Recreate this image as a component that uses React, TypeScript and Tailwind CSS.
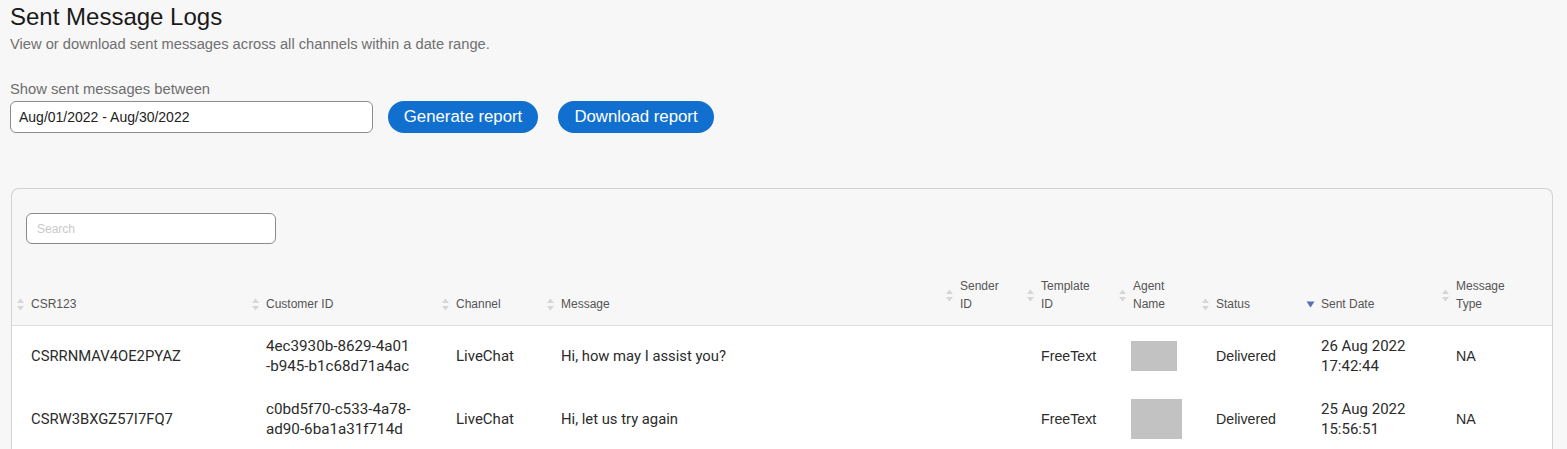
import type { ReactNode } from 'react';

const font = { fontFamily: '"Liberation Sans", Arial, sans-serif' };
const roboto = { fontFamily: 'Roboto, "Liberation Sans", sans-serif' };

interface Column {
  label: ReactNode;
  width: number;
  sorted?: boolean;
}

const columns: Column[] = [
  { label: 'CSR123', width: 235 },
  { label: 'Customer ID', width: 190 },
  { label: 'Channel', width: 105 },
  { label: 'Message', width: 399 },
  { label: <>Sender<br />ID</>, width: 81 },
  { label: <>Template<br />ID</>, width: 92 },
  { label: <>Agent<br />Name</>, width: 83 },
  { label: 'Status', width: 105 },
  { label: 'Sent Date', width: 135, sorted: true },
  { label: <>Message<br />Type</>, width: 115 },
];

interface Row {
  csr: string;
  customer: [string, string];
  channel: string;
  message: string;
  template: string;
  agentBox: string;
  status: string;
  date: [string, string];
  type: string;
}

const rows: Row[] = [
  {
    csr: 'CSRRNMAV4OE2PYAZ',
    customer: ['4ec3930b-8629-4a01', '-b945-b1c68d71a4ac'],
    channel: 'LiveChat',
    message: 'Hi, how may I assist you?',
    template: 'FreeText',
    agentBox: 'w-[46px] h-[30px]',
    status: 'Delivered',
    date: ['26 Aug 2022', '17:42:44'],
    type: 'NA',
  },
  {
    csr: 'CSRW3BXGZ57I7FQ7',
    customer: ['c0bd5f70-c533-4a78-', 'ad90-6ba1a31f714d'],
    channel: 'LiveChat',
    message: 'Hi, let us try again',
    template: 'FreeText',
    agentBox: 'w-[51px] h-[40px]',
    status: 'Delivered',
    date: ['25 Aug 2022', '15:56:51'],
    type: 'NA',
  },
];

function SortIcon({ active }: { active?: boolean }) {
  if (active) {
    return (
      <svg width="7" height="13" viewBox="0 0 7 13" className="shrink-0 overflow-visible">
        <polygon points="-0.5,3.5 7.5,3.5 3.5,9.5" fill="#5b6db3" />
      </svg>
    );
  }
  return (
    <svg width="7" height="13" viewBox="0 0 7 13" className="shrink-0">
      <polygon points="0,5 3.5,0.5 7,5" fill="#d6d6d6" />
      <polygon points="0,8 3.5,12.5 7,8" fill="#d6d6d6" />
    </svg>
  );
}

export default function App() {
  return (
    <div className="min-h-screen bg-[#f7f7f7] pl-[10px] pr-[14px] pt-[3px] text-[#222]" style={font}>
      <h1 className="text-[24px] leading-[28px] font-normal text-[#1a1a1a]">Sent Message Logs</h1>
      <p className="mt-[3px] text-[14.7px] leading-[20px] text-[#707070]">
        View or download sent messages across all channels within a date range.
      </p>

      <label className="mt-[25px] block text-[14.75px] leading-[20px] text-[#6e6e6e]">Show sent messages between</label>
      <div className="mt-[2px] flex items-center">
        <input
          readOnly
          value="Aug/01/2022 - Aug/30/2022"
          className="h-[32px] w-[363px] rounded-[6px] border border-[#8c8c8c] bg-white px-[8px] text-[14px] text-[#222] outline-none"
          style={font}
        />
        <button className="ml-[15px] h-[32px] w-[150px] rounded-full bg-[#1170cf] text-[16.8px] text-white">
          Generate report
        </button>
        <button className="ml-[20px] h-[32px] w-[156px] rounded-full bg-[#1170cf] text-[16.8px] text-white">
          Download report
        </button>
      </div>

      <div className="mt-[55px] ml-[1px] overflow-hidden rounded-t-[8px] border border-b-0 border-[#d2d2d2]">
        <div className="px-[14px] pt-[24px]">
          <input
            readOnly
            placeholder="Search"
            className="h-[31px] w-[250px] rounded-[6px] border border-[#8a8a8a] bg-white px-[10px] text-[12px] text-[#222] outline-none placeholder:text-[#c9c9c9]"
            style={font}
          />
        </div>

        <table className="mt-[26px] w-full table-fixed border-collapse">
          <colgroup>
            {columns.map((c, i) => (
              <col key={i} style={{ width: c.width }} />
            ))}
          </colgroup>
          <thead>
            <tr className="border-b border-[#dcdcdc]">
              {columns.map((c, i) => (
                <th key={i} className="pl-[5px] pt-[7px] pb-[12px] text-left align-bottom font-normal">
                  <div className="flex items-center gap-[7px] text-[12px] leading-[18px] text-[#555]">
                    <SortIcon active={c.sorted} />
                    <span>{c.label}</span>
                  </div>
                </th>
              ))}
            </tr>
          </thead>
          <tbody className="bg-white text-[14.2px] leading-[20px] text-[#2b2b2b]">
            {rows.map((r) => (
              <tr key={r.csr} className="h-[63px]">
                <td className="pl-[19px] pb-[2px] text-[14.8px]" style={roboto}>{r.csr}</td>
                <td className="pl-[19px] pb-[2px] text-[15.2px]" style={roboto}>
                  {r.customer[0]}
                  <br />
                  {r.customer[1]}
                </td>
                <td className="pl-[19px] pb-[2px] text-[15px]" style={roboto}>{r.channel}</td>
                <td className="pl-[19px] pb-[2px] text-[14.8px]" style={roboto}>{r.message}</td>
                <td className="pl-[19px] pb-[2px]"></td>
                <td className="pl-[19px] pb-[2px]">{r.template}</td>
                <td className="pl-[17px] pb-[2px]">
                  <div className={`${r.agentBox} bg-[#c2c2c2]`} />
                </td>
                <td className="pl-[19px] pb-[2px]">{r.status}</td>
                <td className="pl-[19px] pb-[2px] text-[15px]" style={roboto}>
                  {r.date[0]}
                  <br />
                  {r.date[1]}
                </td>
                <td className="pl-[19px] pb-[2px]">{r.type}</td>
              </tr>
            ))}
          </tbody>
        </table>
      </div>
    </div>
  );
}
